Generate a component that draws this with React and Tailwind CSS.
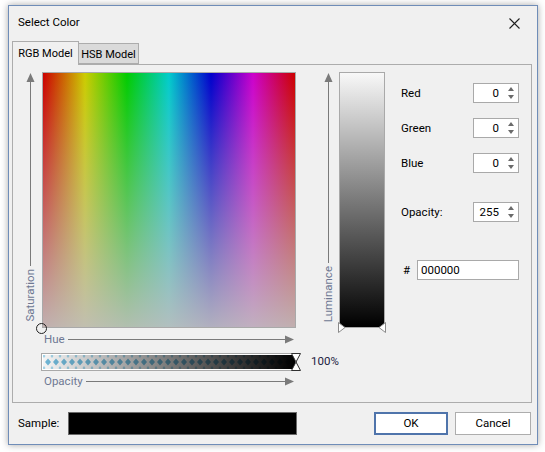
import React from "react";

const AXIS_TEXT = "text-[#6e7893]";

const ArrowUp = () => (
    <svg width="9" height="9" viewBox="0 0 9 9" className="shrink-0">
        <path d="M4.5 0L8.5 9H0.5z" fill="#7a7a7a" />
    </svg>
);

const ArrowRight = () => (
    <svg width="9" height="9" viewBox="0 0 9 9" className="shrink-0">
        <path d="M0 0.5L9 4.5L0 8.5z" fill="#7a7a7a" />
    </svg>
);

const VerticalAxis = ({ label }) => (
    <div className="flex h-[256px] w-[9px] flex-col items-center pt-px pb-[6px]">
        <ArrowUp />
        <div className="w-px flex-1 bg-[#7a7a7a]" />
        <span className={`mt-[3px] rotate-180 leading-[9px] [writing-mode:vertical-rl] text-[11.5px] ${AXIS_TEXT}`}>{label}</span>
    </div>
);

const HorizontalAxis = ({ label }) => (
    <div className="ml-[18px] flex h-[14px] w-[250px] items-center">
        <span className={`text-[11.5px] leading-[14px] ${AXIS_TEXT}`}>{label}</span>
        <div className="ml-[3px] h-px flex-1 bg-[#7a7a7a]" />
        <ArrowRight />
    </div>
);

const SpinBox = ({ value }) => (
    <div className="flex h-[20px] w-[46px] items-center border border-[#a9a9a9] bg-white">
        <span className="flex-1 pt-px pr-[9px] text-right text-[11.5px] leading-none">{value}</span>
        <div className="flex flex-col items-center gap-[4px] pr-[4px]">
            <svg width="6" height="4" viewBox="0 0 6 4">
                <path d="M3 0L6 4H0z" fill="#6a6a6a" />
            </svg>
            <svg width="6" height="4" viewBox="0 0 6 4">
                <path d="M0 0H6L3 4z" fill="#6a6a6a" />
            </svg>
        </div>
    </div>
);

const FieldRow = ({ label, value, className }) => (
    <div className={`flex h-[20px] items-center ${className}`}>
        <span className="pt-px text-[11.5px]">{label}</span>
        <div className="ml-auto">
            <SpinBox value={value} />
        </div>
    </div>
);

const OpacityBar = () => (
    <div className="relative ml-[15px] h-[18px] w-[256px] shrink-0 border border-[#a9a9a9] bg-white p-px">
        <div className="relative h-full w-full overflow-hidden">
            <svg className="absolute inset-0" width="100%" height="100%">
                <defs>
                    <pattern id="diamonds" width="8" height="14" patternUnits="userSpaceOnUse" x="1">
                        <path d="M4 3.5L7 7L4 10.5L1 7z" fill="#6fb6d6" />
                        <path d="M0 -1L1.5 1L0 3L-1.5 1zM8 -1L9.5 1L8 3L6.5 1z" fill="#9fd0e4" />
                        <path d="M0 11L1.5 13L0 15L-1.5 13zM8 11L9.5 13L8 15L6.5 13z" fill="#9fd0e4" />
                    </pattern>
                </defs>
                <rect width="100%" height="100%" fill="#f4f4f4" />
                <rect width="100%" height="100%" fill="url(#diamonds)" />
            </svg>
            <div className="absolute inset-0 bg-[linear-gradient(to_right,rgba(0,0,0,0),rgba(0,0,0,0.5)_50%,#000)]" />
        </div>
        <svg width="10" height="18" viewBox="0 0 10 18" className="absolute -top-px -right-[5px]">
            <path d="M0.5 0.5H9.5L5 9L9.5 17.5H0.5L5 9z" fill="white" stroke="#303030" />
        </svg>
    </div>
);

const LuminanceBar = () => (
    <div className="relative h-[256px] w-[46px] border border-[#a9a9a9] bg-[linear-gradient(to_bottom,#f8f8f8,#7a7a7a_50%,#000)]">
        <svg width="8" height="11" viewBox="0 0 8 11" className="absolute -bottom-[6px] -left-[2px]">
            <path d="M0.5 0.5L7 5.5L0.5 10.5z" fill="white" stroke="#8a8a8a" />
        </svg>
        <svg width="8" height="11" viewBox="0 0 8 11" className="absolute -right-[2px] -bottom-[6px]">
            <path d="M7.5 0.5L1 5.5L7.5 10.5z" fill="white" stroke="#8a8a8a" />
        </svg>
    </div>
);

export default function App() {
    return (
        <div className="min-h-[452px] bg-white pt-[5px] pl-[8px] font-[Roboto,'Noto_Sans',sans-serif] text-black">
            <div className="flex h-[440px] w-[530px] flex-col border border-[#6f8db8] bg-[#f0f0f0] shadow-[0_0_7px_rgba(0,0,0,0.35)]">
                {/* title bar */}
                <div className="flex h-[31px] shrink-0 items-center justify-between pt-[3px] pr-[17px] pl-[9px]">
                    <span className="text-[11.5px]">Select Color</span>
                    <svg width="11" height="11" viewBox="0 0 11 11">
                        <path d="M0.5 0.5L10.5 10.5M10.5 0.5L0.5 10.5" stroke="#202020" strokeWidth="1.1" />
                    </svg>
                </div>

                {/* tabs */}
                <div className="mt-[4px] mr-[5px] ml-[3px] flex h-[23px] shrink-0 items-end">
                    <div className="relative z-10 -mb-px flex h-[24px] w-[67px] items-start justify-center border border-b-0 border-[#acacac] bg-[#f0f0f0] pt-[4px] text-[11px]">
                        RGB Model
                    </div>
                    <div className="flex h-[21px] w-[60px] items-start justify-center border border-l-0 border-[#acacac] bg-[#dadada] pt-[3px] text-[11px]">
                        HSB Model
                    </div>
                </div>

                {/* tab page */}
                <div className="mr-[5px] ml-[3px] flex h-[339px] shrink-0 border border-[#acacac] pt-[7px] pl-[13px]">
                    <div className="flex w-[270px] shrink-0 flex-col">
                        <div className="flex items-start gap-[7px]">
                            <VerticalAxis label="Saturation" />
                            <div className="relative h-[256px] w-[254px] border border-[#a9a9a9] bg-[linear-gradient(to_bottom,rgba(192,192,192,0),rgba(192,190,190,0.92)),linear-gradient(to_right,#cc0000,#cccc00,#00cc00,#00cccc,#0000cc,#cc00cc,#cc0000)]">
                                <div className="absolute -bottom-[7px] -left-[7px] h-[11px] w-[11px] rounded-full border border-[#202020]" />
                            </div>
                        </div>
                        <div className="mt-[4px]">
                            <HorizontalAxis label="Hue" />
                        </div>
                        <div className="mt-[7px] flex w-max items-center">
                            <OpacityBar />
                            <span className="ml-[14px] text-[11.5px] text-[#1a1a40]">100%</span>
                        </div>
                        <div className="mt-[3px]">
                            <HorizontalAxis label="Opacity" />
                        </div>
                    </div>

                    <div className="ml-[28px] flex shrink-0 items-start gap-[6px]">
                        <VerticalAxis label="Luminance" />
                        <LuminanceBar />
                    </div>

                    <div className="ml-[16px] flex w-[118px] shrink-0 flex-col">
                        <FieldRow label="Red" value="0" className="mt-[11px]" />
                        <FieldRow label="Green" value="0" className="mt-[15px]" />
                        <FieldRow label="Blue" value="0" className="mt-[15px]" />
                        <FieldRow label="Opacity:" value="255" className="mt-[29px]" />
                        <div className="mt-[38px] flex h-[20px] items-center">
                            <span className="ml-[2px] pt-px text-[11.5px]">#</span>
                            <div className="ml-auto flex h-[20px] w-[102px] items-center border border-[#a9a9a9] bg-white pt-px pl-[3px] text-[11.5px]">
                                000000
                            </div>
                        </div>
                    </div>
                </div>

                {/* bottom row */}
                <div className="mt-[9px] flex h-[23px] shrink-0 items-center pr-[6px] pl-[9px]">
                    <span className="w-[50px] text-[11.5px]">Sample:</span>
                    <div className="h-[23px] w-[229px] border border-[#6a6a6a] bg-black" />
                    <button className="ml-auto h-[23px] w-[74px] border-2 border-[#4f74ab] bg-white text-[11.5px]">OK</button>
                    <button className="ml-[7px] h-[23px] w-[76px] border border-[#adadad] bg-white text-[11.5px]">Cancel</button>
                </div>
            </div>
        </div>
    );
}
